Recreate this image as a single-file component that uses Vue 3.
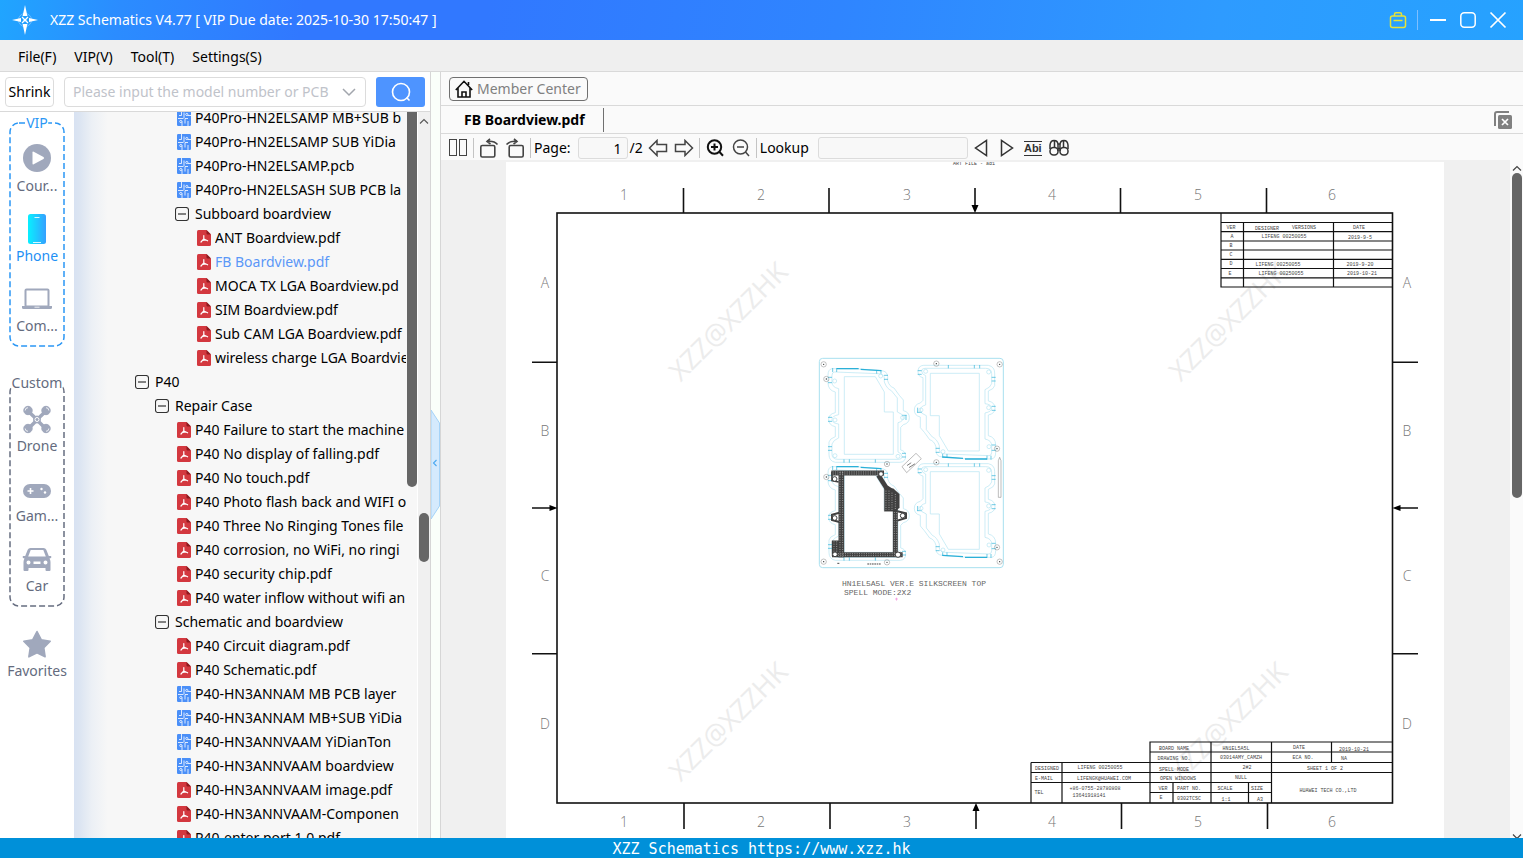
<script setup>
import { ref } from 'vue'

const menus = ['File(F)', 'VIP(V)', 'Tool(T)', 'Settings(S)']
const keyword = ref('')
const page = ref('1')
const lookup = ref('')

const rows = [
  { l: 2, k: 'pcb', t: 'P40Pro-HN2ELSAMP MB+SUB b' },
  { l: 2, k: 'pcb', t: 'P40Pro-HN2ELSAMP SUB YiDia' },
  { l: 2, k: 'pcb', t: 'P40Pro-HN2ELSAMP.pcb' },
  { l: 2, k: 'pcb', t: 'P40Pro-HN2ELSASH SUB PCB la' },
  { l: 2, k: 'dir', t: 'Subboard boardview' },
  { l: 3, k: 'pdf', t: 'ANT Boardview.pdf' },
  { l: 3, k: 'pdf', t: 'FB Boardview.pdf', on: true },
  { l: 3, k: 'pdf', t: 'MOCA TX LGA Boardview.pd' },
  { l: 3, k: 'pdf', t: 'SIM Boardview.pdf' },
  { l: 3, k: 'pdf', t: 'Sub CAM LGA Boardview.pdf' },
  { l: 3, k: 'pdf', t: 'wireless charge LGA Boardvie' },
  { l: 0, k: 'dir', t: 'P40' },
  { l: 1, k: 'dir', t: 'Repair Case' },
  { l: 2, k: 'pdf', t: 'P40 Failure to start the machine' },
  { l: 2, k: 'pdf', t: 'P40 No display of falling.pdf' },
  { l: 2, k: 'pdf', t: 'P40 No touch.pdf' },
  { l: 2, k: 'pdf', t: 'P40 Photo flash back and WIFI o' },
  { l: 2, k: 'pdf', t: 'P40 Three No Ringing Tones file' },
  { l: 2, k: 'pdf', t: 'P40 corrosion, no WiFi, no ringi' },
  { l: 2, k: 'pdf', t: 'P40 security chip.pdf' },
  { l: 2, k: 'pdf', t: 'P40 water inflow without wifi an' },
  { l: 1, k: 'dir', t: 'Schematic and boardview' },
  { l: 2, k: 'pdf', t: 'P40 Circuit diagram.pdf' },
  { l: 2, k: 'pdf', t: 'P40 Schematic.pdf' },
  { l: 2, k: 'pcb', t: 'P40-HN3ANNAM MB PCB layer' },
  { l: 2, k: 'pcb', t: 'P40-HN3ANNAM MB+SUB YiDia' },
  { l: 2, k: 'pcb', t: 'P40-HN3ANNVAAM YiDianTon' },
  { l: 2, k: 'pcb', t: 'P40-HN3ANNVAAM boardview' },
  { l: 2, k: 'pdf', t: 'P40-HN3ANNVAAM image.pdf' },
  { l: 2, k: 'pdf', t: 'P40-HN3ANNVAAM-Componen' },
  { l: 2, k: 'pdf', t: 'P40-enter port 1.0.pdf' },
]

const cols = [['1', 624], ['2', 761], ['3', 907], ['4', 1052], ['5', 1198], ['6', 1332]]
const sides = [['A', 283], ['B', 431], ['C', 576], ['D', 724]]
const marks = [[728, 321], [1228, 321], [728, 721], [1228, 721]]

const notes = [
  [1231, 229, 'VER'], [1267, 230, 'DESIGNER'], [1304, 229, 'VERSIONS'], [1359, 229, 'DATE'],
  [1232, 238, 'A'], [1231, 247, 'B'], [1231, 256, 'C'], [1231, 265, 'D'], [1230, 275, 'E'],
  [1284, 238, 'LIFENG 00250055'], [1360, 239, '2019-9-5'],
  [1278, 266, 'LIFENG 00250055'], [1360, 266, '2019-9-20'],
  [1281, 275, 'LIFENG 00250055'], [1362, 275, '2019-10-21'],
  [1174, 750, 'BOARD NAME'], [1236, 750, 'HN1EL5A5L'], [1299, 749, 'DATE'], [1354, 751, '2019-10-21'],
  [1174, 760, 'DRAWING NO.'], [1241, 759, '03014AMY_CAMZH'], [1303, 759, 'ECA NO.'], [1344, 760, 'NA'],
  [1047, 770, 'DESIGNED'], [1100, 769, 'LIFENG 00250055'], [1174, 771, 'SPELL MODE'], [1247, 769, '2#2'], [1325, 770, 'SHEET 1 OF 2'],
  [1044, 780, 'E-MAIL'], [1104, 780, 'LIFENGK@HUAWEI.COM'], [1178, 780, 'OPEN WINDOWS'], [1241, 779, 'NULL'],
  [1039, 794, 'TEL'], [1095, 790, '+86-0755-28780808'], [1089, 797, '13641918141'],
  [1163, 790, 'VER'], [1189, 790, 'PART NO.'], [1225, 790, 'SCALE'], [1257, 790, 'SIZE'],
  [1161, 799, 'E'], [1189, 800, '0302TCSC'], [1226, 801, '1:1'], [1260, 801, 'A3'],
  [1328, 792, 'HUAWEI TECH CO.,LTD'],
]

const boards = [
  'translate(0 0)',
  'translate(0 294)',
  'translate(611 383) rotate(180)',
  'translate(611 678) rotate(180)',
]
const holes = [[41, 43], [569, 43], [41, 635], [569, 635], [49, 87], [379, 41], [561, 296], [231, 342], [379, 337], [49, 381], [561, 592], [231, 637]]
</script>

<template>
  <div class="app">
    <header class="title">
      <svg class="logo" width="26" height="30" viewBox="0 0 26 30">
        <circle cx="13" cy="15" r="6.5" fill="none" stroke="#9fd0ff" stroke-width="1" opacity=".6" />
        <path d="M13 0l2.400 11h-4.800zM13 30l2.400-11h-4.800zM0 15l9-2v4zM26 15l-9-2v4z" fill="#fff" />
        <path d="M10 12l2 2M16 12l-2 2M10 18l2-2M16 18l-2-2" stroke="#fff" stroke-width="1.200" />
        <circle cx="13" cy="15" r="1.600" fill="#fff" />
      </svg>
      <h1>XZZ Schematics V4.77 [ VIP Due date: 2025-10-30 17:50:47 ]</h1>
      <div class="winbtns">
        <button aria-label="Toolbox">
          <svg width="18" height="18" viewBox="0 0 18 18" fill="none" stroke="#e8e337" stroke-width="1.500">
            <rect x="1.500" y="5" width="15" height="11.500" rx="2" />
            <path d="M5.500 5V3.200Q5.500 1.700 7 1.700h4q1.500 0 1.500 1.500V5M4.500 9.500h9" />
          </svg>
        </button>
        <i class="bar"></i>
        <button aria-label="Minimize"><svg width="18" height="18" viewBox="0 0 18 18"><path d="M1 9h16" stroke="#fff" stroke-width="2" /></svg></button>
        <button aria-label="Maximize"><svg width="18" height="18" viewBox="0 0 18 18"><rect x="1.800" y="1.800" width="14.400" height="14.400" rx="3.500" fill="none" stroke="#fff" stroke-width="1.500" /></svg></button>
        <button aria-label="Close"><svg width="18" height="18" viewBox="0 0 18 18"><path d="M1.500 1.500l15 15M16.500 1.500l-15 15" stroke="#fff" stroke-width="1.700" /></svg></button>
      </div>
    </header>

    <nav class="menu">
      <button v-for="m in menus" :key="m">{{ m }}</button>
    </nav>

    <div class="body">
      <section class="left">
        <form class="search" @submit.prevent>
          <button type="button" class="shrink">Shrink</button>
          <label class="combo">
            <input v-model="keyword" aria-label="Model number" placeholder="Please input the model number or PCB" />
            <svg width="14" height="10" viewBox="0 0 14 10"><path d="M1 2l6 6 6-6" fill="none" stroke="#a2a6ad" stroke-width="1.500" /></svg>
          </label>
          <button class="go" aria-label="Search">
            <svg width="20" height="20" viewBox="0 0 20 20" fill="none" stroke="#fff" stroke-width="1.600"><circle cx="10" cy="10" r="8.500" /><path d="M15.500 15.500l3 3" /></svg>
          </button>
        </form>

        <div class="panes">
          <aside class="side">
            <div class="group vip">
              <svg class="dash"><rect x="1" y="1" rx="9" /></svg>
              <span class="legend">VIP</span>
              <button class="item">
                <svg width="32" height="32" viewBox="0 0 32 32"><circle cx="16" cy="16" r="14" fill="#a0a8bc" /><path d="M11.500 10.500q0-1.300 1.200-.7l9.800 5.300q1.200.9 0 1.800l-9.800 5.300q-1.200.6-1.200-.7z" fill="#fff" /></svg>
                <span>Cour...</span>
              </button>
              <button class="item on">
                <svg width="32" height="32" viewBox="0 0 32 32">
                  <defs><linearGradient id="ph"><stop offset="0" stop-color="#08f0ff" /><stop offset="1" stop-color="#35a0ff" /></linearGradient></defs>
                  <rect x="7" y="2" width="18" height="30" rx="2.500" fill="url(#ph)" /><path d="M13.500 5.500h5M12 30.500h8" stroke="#d8f8ff" stroke-width="1" />
                </svg>
                <span>Phone</span>
              </button>
              <button class="item">
                <svg width="32" height="32" viewBox="0 0 32 32"><rect x="4.500" y="7.500" width="23" height="17" rx="1" fill="none" stroke="#a0a8bc" stroke-width="2" /><path d="M1 24h30v1.500q0 1.500-1.500 1.500h-27Q1 27 1 25.500z" fill="#a0a8bc" /><path d="M13.500 25.200h5" stroke="#fff" stroke-width=".8" /></svg>
                <span>Com...</span>
              </button>
            </div>

            <div class="group custom">
              <svg class="dash"><rect x="1" y="1" rx="9" /></svg>
              <span class="legend">Custom</span>
              <button class="item">
                <svg width="32" height="32" viewBox="0 0 32 32" fill="none" stroke="#a0a8bc">
                  <path d="M8 10L16 17.500L24 10M8 26L16 18L24 26" stroke-width="3.500" />
                  <g fill="#a0a8bc"><circle cx="7" cy="8.500" r="4.200" /><circle cx="25" cy="8.500" r="4.200" /><circle cx="7" cy="26.500" r="4.200" /><circle cx="25" cy="26.500" r="4.200" /><circle cx="16" cy="17.500" r="3.500" /></g>
                  <path d="M4.200 8.500a2.800 2.800 0 0 1 2.800-2.800M25 5.700a2.800 2.800 0 0 1 2.800 2.800M7 29.300a2.800 2.800 0 0 1-2.800-2.800M27.800 26.500a2.800 2.800 0 0 1-2.800 2.800" stroke="#fff" stroke-width=".8" />
                  <circle cx="16" cy="17.500" r="2" stroke="#fff" stroke-width="1" />
                </svg>
                <span>Drone</span>
              </button>
              <button class="item">
                <svg width="32" height="32" viewBox="0 0 32 32"><rect x="2" y="12" width="28" height="14" rx="7" fill="#a0a8bc" /><path d="M6.500 19h6M9.500 16v6" stroke="#fff" stroke-width="1.600" /><circle cx="20.500" cy="17" r="1.200" fill="#fff" /><circle cx="24" cy="20.500" r="1.200" fill="#fff" /></svg>
                <span>Gam...</span>
              </button>
              <button class="item">
                <svg width="32" height="32" viewBox="0 0 32 32" fill="#a0a8bc"><path fill-rule="evenodd" d="M9.500 6h13q2 0 2.800 1.800l2.500 6.200H30q.8 1 0 2l-1.500.5q1 1.500 1 3.500v8q0 1-1 1h-3q-1 0-1-1v-2h-17v2q0 1-1 1h-3q-1 0-1-1v-8q0-2 1-3.500L2 16q-.8-1 0-2h2.200l2.500-6.200Q7.500 6 9.500 6zM9.700 8L7.200 14.500h17.600L22.300 8zM7.500 18.500a2 2 0 1 0 0 4 2 2 0 1 0 0-4zM24.500 18.500a2 2 0 1 0 0 4 2 2 0 1 0 0-4zM12.500 19.500v2.500h7v-2.500z" /></svg>
                <span>Car</span>
              </button>
            </div>

            <button class="item fav">
              <svg width="32" height="32" viewBox="0 0 32 32"><path d="M16 4.500l4.200 8.200 9 1.500-6.400 6.600 1.300 9L16 25.900l-8.100 3.900 1.300-9L2.800 14.200l9-1.500z" fill="#a0a8bc" stroke="#a0a8bc" stroke-width="1.600" stroke-linejoin="round" /></svg>
              <span>Favorites</span>
            </button>
          </aside>

          <div class="tree">
            <ul>
              <li v-for="(r, i) in rows" :key="i">
                <button :class="['row', 'l' + r.l, { on: r.on }]">
                  <span class="ico">
                    <svg v-if="r.k === 'dir'" width="14" height="14" viewBox="0 0 14 14" fill="none" stroke="#333"><rect x=".5" y=".5" width="13" height="13" rx="2.500" stroke-width="1.100" /><path d="M3 7h8" stroke-width="1.200" /></svg>
                    <svg v-else-if="r.k === 'pdf'" class="file" width="14" height="16" viewBox="0 0 14 16"><path d="M1.500 0H9.500L14 4.500V14.500Q14 16 12.500 16h-11Q0 16 0 14.500v-13Q0 0 1.500 0z" fill="#d3383f" /><path d="M9.500 0L14 4.500H10.500Q9.500 4.500 9.500 3.500z" fill="#8e1a20" /><path d="M6.800 5.500V8.800L4 12M6.800 9l3.800 1.800M5.500 10.400l3.500-.4" fill="none" stroke="#fff" stroke-width="1.200" stroke-linecap="round" /></svg>
                    <svg v-else class="file" width="14" height="16" viewBox="0 0 14 16"><rect width="14" height="16" rx="1.200" fill="#4a8ff8" /><path d="M4.500 0v5.500H2M1 8.500h5.500M7 2.500V8M8 13.500V8.500h3M5 11.500v4.500M11 11v5M10.500 5.500H14" fill="none" stroke="#fff" stroke-width=".9" opacity=".9" /><g fill="#4a8ff8" stroke="#fff" stroke-width=".8"><circle cx="9.800" cy="4.500" r="1.100" /><circle cx="3.800" cy="11.500" r="1.100" /></g></svg>
                  </span>
                  <span class="name">{{ r.t }}</span>
                </button>
              </li>
            </ul>
            <i class="inner-thumb"></i>
          </div>

          <div class="vscroll">
            <svg width="10" height="6" viewBox="0 0 10 6"><path d="M1 5.500l4-4 4 4" fill="none" stroke="#555" stroke-width="1.100" /></svg>
            <i></i>
          </div>
        </div>
      </section>

      <div class="split">
        <svg width="9" height="110" viewBox="0 0 9 110"><path d="M0 0L8.500 13V96L0 109z" fill="#d5eafd" stroke="#a5d3f8" /><path d="M5.500 50L2.500 53 5.500 56" fill="none" stroke="#4aa8f0" stroke-width="1.100" /></svg>
      </div>

      <section class="right">
        <div class="member">
          <button>
            <svg width="18" height="18" viewBox="0 0 18 18" fill="none" stroke="#111" stroke-width="1.600"><path d="M.8 10L9 1.300 17.200 10M3 8v9h12V8M7 17v-5h4v5M13.500 5V2" /></svg>
            Member Center
          </button>
        </div>
        <div class="tabs">
          <button class="tab">FB Boardview.pdf</button>
          <button class="closeall" aria-label="Close all">
            <svg width="18" height="18" viewBox="0 0 18 18"><path d="M1 15V3q0-2 2-2h12" fill="none" stroke="#808080" stroke-width="2" /><rect x="4" y="4" width="14" height="14" rx="1.500" fill="#808080" /><path d="M8 8l6 6M14 8l-6 6" stroke="#fff" stroke-width="1.700" /></svg>
          </button>
        </div>
        <div class="tools">
          <button aria-label="Two pages"><svg width="20" height="18" viewBox="0 0 20 18" fill="none" stroke="#444"><rect x="1.500" y=".5" width="7" height="16" /><rect x="11.500" y=".5" width="7" height="16" /></svg></button>
          <i class="sep"></i>
          <button aria-label="Rotate left"><svg width="20" height="20" viewBox="0 0 20 20" fill="none" stroke="#444" stroke-width="1.600"><rect x="1.800" y="7.500" width="14" height="11.500" rx="1.500" /><path d="M18.500 6.500Q15 2.500 8 3.500M11 .8L8 3.500l3.500 2.500" /></svg></button>
          <button aria-label="Rotate right"><svg width="20" height="20" viewBox="0 0 20 20" fill="none" stroke="#444" stroke-width="1.600"><rect x="4.200" y="7.500" width="14" height="11.500" rx="1.500" /><path d="M1.500 6.500Q5 2.500 12 3.500M9 .8l3 2.700L8.500 6" /></svg></button>
          <i class="sep"></i>
          <label class="pagelab">Page:<input v-model="page" class="pageno" /></label>
          <span class="total">/2</span>
          <button aria-label="Previous page"><svg width="20" height="18" viewBox="0 0 20 18"><path d="M1.500 9L9 1.500V5.500H18.500V12.500H9V16.500z" fill="none" stroke="#444" stroke-width="1.500" /></svg></button>
          <button aria-label="Next page"><svg width="20" height="18" viewBox="0 0 20 18"><path d="M18.500 9L11 1.500V5.500H1.500V12.500H11V16.500z" fill="none" stroke="#444" stroke-width="1.500" /></svg></button>
          <i class="sep"></i>
          <button aria-label="Zoom in"><svg width="18" height="18" viewBox="0 0 18 18" fill="none" stroke="#111" stroke-width="2"><circle cx="8.500" cy="8" r="6.700" /><path d="M13.300 12.800l3.700 4M5 8h7M8.500 4.500v7" /></svg></button>
          <button aria-label="Zoom out"><svg width="18" height="18" viewBox="0 0 18 18" fill="none" stroke="#444" stroke-width="1.500"><circle cx="8.500" cy="8" r="7" /><path d="M13.500 13l3.500 4M5 8h7" /></svg></button>
          <i class="sep"></i>
          <label class="looklab">Lookup<input v-model="lookup" class="look" /></label>
          <button aria-label="Find previous"><svg width="14" height="18" viewBox="0 0 14 18"><path d="M12.500 1.500V16.500L1.500 9z" fill="none" stroke="#333" stroke-width="1.500" /></svg></button>
          <button aria-label="Find next"><svg width="14" height="18" viewBox="0 0 14 18"><path d="M1.500 1.500V16.500L12.500 9z" fill="none" stroke="#333" stroke-width="1.500" /></svg></button>
          <button class="abi">Abi</button>
          <button aria-label="Find in file"><svg width="20" height="18" viewBox="0 0 20 18" fill="none" stroke="#333" stroke-width="1.500"><path d="M1 10V6Q1.500 1.500 5 1.500 9 1.500 9 6V12M19 10V6Q18.500 1.500 15 1.500 11 1.500 11 6V12M9 5h2M8.500 9.500h3M5.500 2V8M14.500 2V8" /><rect x="1" y="8.500" width="8" height="7.500" rx="3.500" /><rect x="11" y="8.500" width="8" height="7.500" rx="3.500" /></svg></button>
        </div>

        <div class="viewer">
          <div class="stage">
            <svg class="sheet" width="938" height="676" viewBox="506 162 938 676">
              <rect x="506" y="162" width="938" height="676" fill="#fff" />
              <g class="mark">
                <text v-for="m in marks" :key="m.join()" :transform="`translate(${m[0]} ${m[1]}) rotate(-45)`" y="10">XZZ@XZZHK</text>
              </g>
              <text class="tiny" x="974" y="165">ART FILE - ad1</text>

              <g class="frame">
                <rect x="557" y="213" width="835.500" height="590" />
                <path d="M683.500 188v25M829 188v25M975 188v20M1120.500 188v25M1266.500 188v25" />
                <path d="M684 803v26M830 803v26M976 808v21M1121.500 803v26M1267.500 803v26" />
                <path d="M532 362.300h25M532 508h20M532 653.700h25M1393 362.300h25M1398 508h20M1393 653.700h25" />
              </g>
              <path d="M975 213l-3.500-8h7zM976 803l-3.500 8h7zM557.500 508l-8-3v6zM1392.500 508l8-3v6z" />

              <g class="axis">
                <template v-for="c in cols" :key="c[0]">
                  <text :x="c[1]" y="200">{{ c[0] }}</text>
                  <text :x="c[1]" y="827">{{ c[0] }}</text>
                </template>
                <template v-for="s in sides" :key="s[0]">
                  <text x="545" :y="s[1] + 5">{{ s[0] }}</text>
                  <text x="1407" :y="s[1] + 5">{{ s[0] }}</text>
                </template>
              </g>

              <g class="grid">
                <path d="M1221 213v74h171M1221 222.500h171M1221 231.700h171M1221 241h171M1221 250h171M1221 259.300h171M1221 268.500h171M1221 277.800h171M1243.500 222.500v64.500M1333.500 222.500v64.500" />
                <path d="M1150 803v-61h242M1150 752h242M1150 762.500h242M1031 762.500h119M1031 762.500v40.500M1062 762.500v40.500M1031 772.500h361M1031 782.500h240M1150 792.500h121M1211 742v61M1271.500 742v61M1331.500 742v20M1173 782.500v20.500M1248.500 782.500v20.500" />
              </g>
              <g class="tiny">
                <text v-for="(n, i) in notes" :key="i" :x="n[0]" :y="n[1]">{{ n[2] }}</text>
              </g>

              <g transform="translate(810 350) scale(.333333)" fill="none">
                <rect x="28" y="25" width="552" height="628" rx="10" stroke="#a9e0ef" stroke-width="3" />
                <g v-for="b in boards" :key="b" :transform="b">
                  <path class="thin" d="M66 56L150 57 214 62Q232 63 233 80V92Q238 110 252 114L268 136 280 150V182Q298 186 298 203 298 220 280 224L272 232V300Q287 303 287 318 287 336 270 337H76Q57 333 57 314V276Q59 266 76 260V230Q56 226 56 208 56 192 76 188V126Q54 121 54 98V76Q54 58 66 56z" />
                  <path class="thin" d="M74 66L205 71Q222 72 223 84V96Q230 116 244 122L262 144V186Q280 192 280 203 280 214 264 218V306Q276 310 276 320 276 328 266 328H84Q66 328 66 312V282Q70 270 86 264V222Q66 220 66 208 66 198 86 194V116Q66 112 66 96V76Q66 66 74 66z" />
                  <path class="thin" d="M103 80H196L223 126V186H250V313H103z" />
                  <path class="strong" d="M80 56H146M152 58L214 62" />
                  <path class="ticks" d="M68 54v12M80 54v12M200 60v11M213 60v11M222 76h12M222 88h12M54 82h12M54 98h12M54 202h12M54 214h12M54 290h12M54 301h12M276 196h14M288 196v14M276 310h12M276 321h12M102 328v10M118 328v10M196 328v10" />
                  <g class="thin"><circle cx="74" cy="93" r="6" /><circle cx="212" cy="78" r="6" /><circle cx="75" cy="210" r="6" /><circle cx="278" cy="203" r="6" /><circle cx="75" cy="317" r="6" /><circle cx="264" cy="319" r="6" /></g>
                </g>

                <g stroke="#404040">
                  <path d="M94 364V622" stroke-width="17" />
                  <path d="M64 369H222M66 614H278M256 470V614" stroke-width="15" />
                  <path d="M205 376L228 412 250 426" stroke-width="14" />
                  <path d="M223 416H250L268 432V474L250 484H223z" fill="#404040" />
                  <path d="M66 572H88V618H66z" fill="#404040" />
                  <path d="M262 484L288 490V504L262 512M88 488L66 494V510L88 516" stroke-width="6" />
                  <path d="M66 365V392L86 396" stroke-width="5" />
                </g>
                <g stroke="#c4c4c4" stroke-width="2" stroke-dasharray="3 4">
                  <path d="M90 366V620M98 366V620M68 366H220M68 372H220M70 611H274M70 617H274M253 486V608M260 486V608M228 422V480M237 422V480M246 428V480M256 432V478M72 574V606M80 574V606" />
                </g>
                <g fill="#fff" stroke="#404040" stroke-width="3"><circle cx="74" cy="387" r="7" /><circle cx="213" cy="372" r="7" /><circle cx="74" cy="504" r="7" /><circle cx="278" cy="497" r="7" /><circle cx="75" cy="613" r="7" /><circle cx="264" cy="614" r="8" /></g>
                <g stroke="#888" stroke-width="1.500"><circle v-for="h in holes" :key="h.join()" :cx="h[0]" :cy="h[1]" r="8" /></g>
                <g fill="#333"><circle v-for="h in holes" :key="h.join()" :cx="h[0]" :cy="h[1]" r="2" /></g>
                <path d="M276 350L318 310 334 326 290 368zM569 322l-4 10v110h8V332z" stroke="#777" stroke-width="1.500" />
                <path d="M292 346l12-8M298 352l16-10M82 640h8M172 642h42" stroke="#444" stroke-width="3" stroke-dasharray="5 2" />
                <path d="M255 747h9M259.500 743v9" stroke="#f06ad0" stroke-width="1.500" />
              </g>
              <g class="cad">
                <text x="842" y="586">HN1EL5A5L VER.E SILKSCREEN TOP</text>
                <text x="844" y="595">SPELL MODE:2X2</text>
              </g>
            </svg>
          </div>
          <div class="vbar">
            <svg width="10" height="6" viewBox="0 0 10 6"><path d="M1 5.500l4-4 4 4" fill="none" stroke="#444" stroke-width="1.200" /></svg>
            <i></i>
            <svg width="10" height="6" viewBox="0 0 10 6"><path d="M1 2.500l4 4 4-4" fill="none" stroke="#444" stroke-width="1.200" /></svg>
          </div>
        </div>
      </section>
    </div>

    <footer class="foot">XZZ Schematics https://www.xzz.hk</footer>
  </div>
</template>

<style>
body { margin: 0; overflow: hidden; }
</style>

<style scoped>
.app { height: 100vh; display: flex; flex-direction: column; font: 14px/20px "Noto Sans", "Open Sans", sans-serif; color: #000; background: #fff; }
.app * { box-sizing: border-box; }
button { font: inherit; color: inherit; background: none; border: 0; padding: 0; margin: 0; }
input { font: inherit; color: inherit; outline: 0; min-width: 0; }
svg { display: block; flex: none; }

.title { flex: none; height: 40px; display: flex; align-items: center; padding: 0 16px 0 12px; background: linear-gradient(100deg, #20a5ff 0, #2b8cff 8%, #3178ff 20%, #3178ff 32%, #2f85ff 55%, #2e9bff 80%, #26a2ff 100%); color: #fff; }
.title h1 { flex: 1; margin: 0 0 0 12px; font-size: 14px; line-height: 22px; font-weight: 400; }
.winbtns { display: flex; align-items: center; gap: 12px; }
.winbtns button:first-child { margin-right: -2px; }
.bar { width: 1px; height: 20px; margin-right: -1px; background: #7fbfff; }

.menu { flex: none; height: 32px; display: flex; align-items: center; gap: 18px; padding: 2px 18px 0; background: #efefef; border-bottom: 1px solid #d9d9d9; }

.body { flex: 1; min-height: 0; display: flex; }
.left { flex: none; width: 431px; display: flex; flex-direction: column; border-right: 1px solid #d6d6d6; }
.search { flex: none; height: 40px; display: flex; align-items: center; padding: 0 5px; border-bottom: 1px solid #d9d9d9; }
.shrink { width: 49px; height: 30px; border: 1px solid #dcdcdc; border-radius: 4px; }
.combo { flex: 1; display: flex; align-items: center; height: 30px; margin: 0 10px; padding: 0 9px 0 8px; border: 1px solid #dcdcdc; border-radius: 4px; }
.combo input { flex: 1; border: 0; padding: 0; background: none; }
.combo input::placeholder { color: #bfc3ca; opacity: 1; }
.go { width: 49px; height: 30px; display: grid; place-items: center; background: #4e94ff; border-radius: 3px; }
.panes { flex: 1; min-height: 0; display: flex; }

.side { flex: none; width: 74px; padding: 10px 9px; background: #fff; color: #646b7e; }
.group { position: relative; width: 56px; height: 225px; padding-top: 12px; }
.custom { margin-top: 35px; }
.dash { position: absolute; inset: 0; width: 100%; height: 100%; }
.dash rect { width: calc(100% - 2px); height: calc(100% - 2px); fill: none; stroke: #666d80; stroke-width: 1.5px; stroke-dasharray: 6 3; }
.vip .dash rect { stroke: #2b97f5; }
.legend { position: absolute; top: -9px; left: 50%; transform: translateX(-50%); background: #fff; }
.vip .legend { color: #2b97f5; }
.item { width: 56px; height: 70px; display: flex; flex-direction: column; align-items: center; justify-content: center; gap: 2px; white-space: nowrap; }
.item.on { color: #1e90f5; }
.fav { margin-top: 12px; }

.tree { flex: 1; min-width: 0; display: flex; overflow: hidden; background: linear-gradient(90deg, #d8e2f2 0, #dce5f2 6px, #ecf0f5 18px, #f7f7f7 34px); }
.tree ul { flex: 1; min-width: 0; list-style: none; margin: -6px 0 0; padding: 0; }
.row { width: 100%; height: 24px; display: flex; align-items: center; text-align: left; white-space: nowrap; }
.l0 { padding-left: 61px; }
.l1 { padding-left: 81px; }
.l2 { padding-left: 101px; }
.l3 { padding-left: 121px; }
.ico { flex: none; width: 20px; }
.file { margin-left: 2px; }
.name { flex: 1; min-width: 0; overflow: hidden; }
.row.on { color: #5b97f7; }
.inner-thumb { flex: none; width: 10px; height: 375px; margin-left: 1px; background: #666; border-radius: 0 0 5px 5px; }
.vscroll { flex: none; width: 12px; padding: 6px 0 0; margin-left: 1px; display: flex; flex-direction: column; align-items: center; background: #f0f0f0; }
.vscroll i { width: 10px; height: 49px; margin-top: 389px; border-radius: 5px; background: #666; }

.split { flex: none; width: 9px; display: flex; flex-direction: column; background: #fafffa; padding-top: 338px; }

.right { flex: 1; min-width: 0; display: flex; flex-direction: column; background: #fafafa; border-left: 1px solid #d6d6d6; }
.member { flex: none; height: 34px; display: flex; align-items: center; padding-left: 8px; border-bottom: 1px solid #d9d9d9; }
.member button { height: 24px; display: flex; align-items: center; gap: 4px; padding: 0 6px 0 5px; border: 1px solid #707070; border-radius: 4px; color: #808080; }
.tabs { flex: none; height: 28px; display: flex; align-items: center; justify-content: space-between; padding-right: 11px; border-bottom: 1px solid #d9d9d9; }
.tab { height: 24px; padding: 0 18px 0 23px; border-right: 1px solid #707070; font-weight: 700; }
.tools { flex: none; height: 26px; display: flex; align-items: center; padding: 2px 4px 0; gap: 0; }
.tools button { flex: none; width: 26px; height: 24px; display: grid; place-items: center; }
.sep { width: 1px; height: 20px; margin: 0 2px; background: #c4c4c4; }
.tools label { display: flex; align-items: center; }
.tools .pagelab { margin-left: 1px; }
.pageno { width: 50px; height: 22px; margin-left: 7px; padding: 0 5px; border: 1px solid #dcdcdc; border-radius: 3px; background: #f8f8f8; text-align: right; }
.total { margin: 0 2px; }
.tools .looklab { margin-left: 1px; }
.look { width: 150px; height: 22px; margin: 0 0 0 9px; padding: 0 5px; border: 1px solid #dcdcdc; border-radius: 3px; background: #f8f8f8; }
.tools .abi { width: 18px; height: 15px; margin: 0 4px; border: solid #333; border-width: 1px 0; font: 700 11px/13px "Liberation Sans", sans-serif; color: #333; }

.viewer { flex: 1; min-height: 0; display: flex; }
.stage { flex: 1; min-width: 0; display: flex; justify-content: center; overflow: hidden; padding: 2px 1px 0 0; background: #f0f0f0; }
.vbar { flex: none; width: 13px; display: flex; flex-direction: column; align-items: center; padding-top: 5px; overflow: hidden; }
.vbar i { width: 10px; height: 325px; margin: 2px 0 auto; border-radius: 5px; background: #666; }

.mark { font: 400 27px "Open Sans", "Noto Sans", sans-serif; fill: #ececec; text-anchor: middle; }
.frame { fill: none; stroke: #111; stroke-width: 1.6px; }
.grid { fill: none; stroke: #111; stroke-width: 1.2px; }
.axis { font: 300 14px "Open Sans", "Noto Sans", sans-serif; fill: #777; text-anchor: middle; }
.tiny { font: 5px "Liberation Mono", monospace; fill: #444; text-anchor: middle; }
.cad { font: 8px "Liberation Mono", monospace; fill: #666; }
.thin { stroke: #b4e4f1; stroke-width: 2px; }
.strong { stroke: #2bb0d8; stroke-width: 4px; }
.ticks { stroke: #2bb0d8; stroke-width: 2px; }

.foot { flex: none; height: 20px; background: #0090d9; color: #fff; text-align: center; font: 15px/22px "DejaVu Sans Mono", "Liberation Mono", monospace; }
</style>
